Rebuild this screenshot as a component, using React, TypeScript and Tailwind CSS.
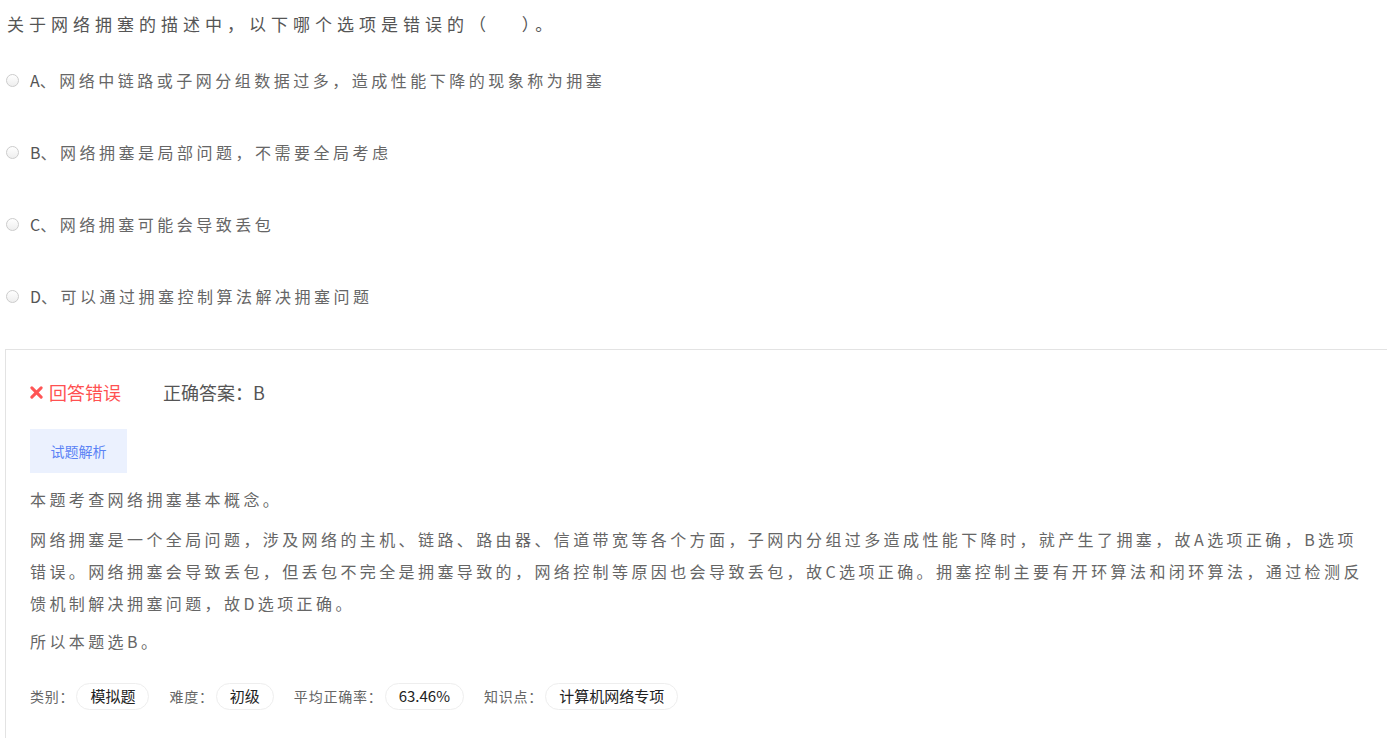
import React from "react";

const options = [
  { key: "A", text: "网络中链路或子网分组数据过多，造成性能下降的现象称为拥塞" },
  { key: "B", text: "网络拥塞是局部问题，不需要全局考虑" },
  { key: "C", text: "网络拥塞可能会导致丢包" },
  { key: "D", text: "可以通过拥塞控制算法解决拥塞问题" },
];

const tags = [
  { label: "类别：", value: "模拟题" },
  { label: "难度：", value: "初级" },
  { label: "平均正确率：", value: "63.46%" },
  { label: "知识点：", value: "计算机网络专项" },
];

const font = {
  fontFamily: '"Noto Sans CJK SC", "Noto Sans", sans-serif',
};

const App = () => {
  return (
    <div className="w-[1387px] h-[738px] overflow-hidden bg-white" style={font}>
      {/* Question */}
      <div className="pl-[7px] pt-[11px] text-[17px] leading-[26px] tracking-[5px] text-[#555]">
        关于网络拥塞的描述中，以下哪个选项是错误的（　 ）。
      </div>

      {/* Options */}
      <div className="mt-[30px] flex flex-col gap-[46px]">
        {options.map((o) => (
          <label key={o.key} className="flex items-center h-[26px] pl-[6px]">
            <span className="w-[13px] h-[13px] rounded-full border border-[#ccc] bg-gradient-to-b from-[#fff] to-[#eee]" />
            <span className="ml-[11px] text-[16px] tracking-[3.5px] text-[#666]">
              <span className="text-[#555] tracking-[0px]">{o.key}</span>、{o.text}
            </span>
          </label>
        ))}
      </div>

      {/* Result panel */}
      <div className="ml-[5px] mt-[40px] border-l border-t border-[#e3e3e3] pl-[24px] pt-[28px] pb-[40px]">
        <div className="flex items-center h-[28px]">
          <svg className="w-[13px] h-[13px] text-[#f55]" viewBox="0 0 14 14">
            <path d="M2 2 L12 12 M12 2 L2 12" stroke="currentColor" strokeWidth="3.2" strokeLinecap="round" />
          </svg>
          <span className="ml-[6px] text-[18px] text-[#ff5151]">回答错误</span>
          <span className="ml-[42px] text-[18px] text-[#555]">正确答案：B</span>
        </div>

        <button className="mt-[23px] w-[97px] h-[44px] bg-[#ebf1fe] text-[14px] text-[#5a82f5]">
          试题解析
        </button>

        <div className="mt-[13px] text-[16px] tracking-[3.4px] leading-[32px] text-[#666]">
          <p className="leading-[26px]">本题考查网络拥塞基本概念。</p>
          <p className="mt-[11px] pr-[20px]">
            网络拥塞是一个全局问题，涉及网络的主机、链路、路由器、信道带宽等各个方面，子网内分组过多造成性能下降时，就产生了拥塞，故A选项正确，B选项错误。网络拥塞会导致丢包，但丢包不完全是拥塞导致的，网络控制等原因也会导致丢包，故C选项正确。拥塞控制主要有开环算法和闭环算法，通过检测反馈机制解决拥塞问题，故D选项正确。
          </p>
          <p className="mt-[6px]">所以本题选B。</p>
        </div>

        <div className="mt-[26px] flex items-center text-[14px]">
          {tags.map((t) => (
            <div key={t.label} className="flex items-center mr-[20px]">
              <span className="text-[#666] tracking-[0.8px]">{t.label}</span>
              <span className="ml-[2px] h-[27px] px-[13px] flex items-center rounded-full border border-[#eee] text-[15px] text-[#222]">
                {t.value}
              </span>
            </div>
          ))}
        </div>
      </div>
    </div>
  );
};

export default App;
